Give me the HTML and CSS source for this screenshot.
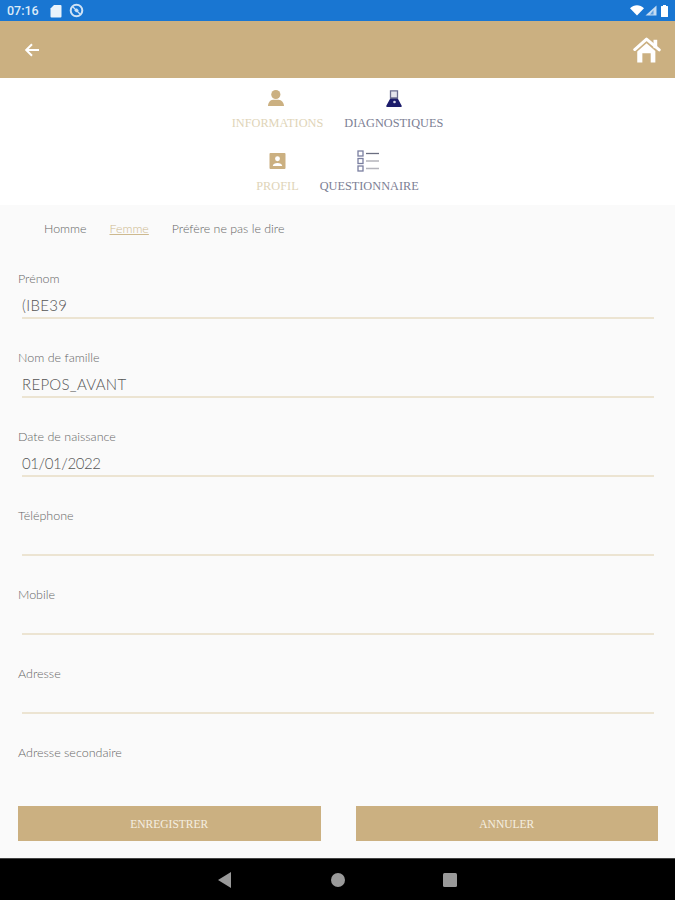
FILE: index.html
```html
<!DOCTYPE html>
<html lang="fr">
<head>
    <meta charset="UTF-8">
    <meta name="viewport" content="width=device-width, initial-scale=1.0">
    <title>Profil</title>
    <link rel="stylesheet" href="styles.css">
</head>
<body>
    <div class="status-bar">
        <div class="status-left">
            <span class="status-time">07:16</span>
            <svg width="12" height="14" viewBox="0 0 12 14"><path d="M4 1h6.500a1 1 0 0 1 1 1v10.500a1 1 0 0 1-1 1h-9a1 1 0 0 1-1-1V4.500z" fill="#eaf3fb"/></svg>
            <svg width="15" height="15" viewBox="0 0 15 15"><circle cx="7.500" cy="7.500" r="5.800" fill="none" stroke="#cfe2f5" stroke-width="2"/><path d="M3.500 3.500l8 8" stroke="#cfe2f5" stroke-width="1.300"/><path d="M5.200 7.200l2.600-2 2 2.400-2.600 2z" fill="#cfe2f5"/></svg>
        </div>
        <div class="status-right">
            <svg width="14" height="11" viewBox="0 0 14 11"><path d="M0 3.200C4-.8 10-.8 14 3.200L7 10.500z" fill="#fff"/></svg>
            <svg width="12" height="11" viewBox="0 0 12 11"><path d="M11.500.5v10H.5z" fill="#c4dcf3"/><path d="M8.500 5v4.500H5z" fill="#5c9ee0"/></svg>
            <svg class="battery" width="7" height="12" viewBox="0 0 7 12"><path d="M2 0h3v1h1.500a.5.500 0 0 1 .5.500V11.500a.5.500 0 0 1-.5.500H.5a.5.500 0 0 1-.5-.5V1.500A.5.500 0 0 1 .5 1H2z" fill="#fff"/></svg>
        </div>
    </div>

    <header class="app-bar">
        <svg width="18" height="18" viewBox="0 0 18 18"><path d="M16 9H3.500M9 3.200L3.200 9 9 14.800" fill="none" stroke="#fff" stroke-width="2"/></svg>
        <svg width="28" height="26" viewBox="0 0 30 28"><path d="M22 3h4v9h-4z" fill="#fff"/><path d="M1.800 13.500L14.500 2.300l13.700 11.500" fill="none" stroke="#fff" stroke-width="3.200" stroke-linecap="round" stroke-linejoin="round"/><path d="M4.500 15.500l10-8.800 9.500 8.300v12.500h-5V17.500h-9v10h-5.500z" fill="#fff"/></svg>
    </header>

    <nav class="tabs">
        <div class="tab-row">
            <a class="tab tab-on">
                <span class="tab-icon">
                    <svg width="18" height="18" viewBox="0 0 18 18"><circle cx="7.800" cy="5.500" r="4.600" fill="#cbb081"/><path d="M0 17c0-3 2-6.300 5-6.300h5.600c3 0 5.400 3.300 5.400 6.300z" fill="#cbb081"/></svg>
                </span>
                <span>INFORMATIONS</span>
            </a>
            <a class="tab">
                <span class="tab-icon">
                    <svg width="16" height="17" viewBox="0 0 16 17"><path d="M4.500 8L.3 15.800a.8.800 0 0 0 .7 1.200h14a.8.800 0 0 0 .7-1.200L11.500 8z" fill="#1c1c6b"/><path d="M4.500 .8h7V8h-7z" fill="#e4e4ec" stroke="#6b6d90" stroke-width="1.300"/><circle cx="8.500" cy="12" r="1.300" fill="#d8d8e8"/></svg>
                </span>
                <span>DIAGNOSTIQUES</span>
            </a>
        </div>
        <div class="tab-row tab-row-low">
            <a class="tab tab-on">
                <span class="tab-icon">
                    <svg width="17" height="16" viewBox="0 0 18 17"><path fill-rule="evenodd" d="M1.500 0h15a1 1 0 0 1 1 1v15a1 1 0 0 1-1 1h-15a1 1 0 0 1-1-1V1a1 1 0 0 1 1-1zM9 3.500a2.600 2.600 0 1 0 0 5.200 2.600 2.600 0 0 0 0-5.200zM4 13.800h10c0-2-2.500-3.200-5-3.200s-5 1.200-5 3.200z" fill="#cbb081"/></svg>
                </span>
                <span>PROFIL</span>
            </a>
            <a class="tab">
                <span class="tab-icon">
                    <svg width="24" height="22" viewBox="0 0 24 22"><g fill="none" stroke="#7a7fa0" stroke-width="1.300"><rect x="1" y="1" width="5" height="5"/><rect x="1" y="8.500" width="5" height="5"/><rect x="1" y="16" width="5" height="5"/></g><path d="M9 3.500h13" stroke="#6a6e80" stroke-width="1.300"/><path d="M9 11h13M9 18.500h13" stroke="#b4b4bb" stroke-width="1.300"/></svg>
                </span>
                <span>QUESTIONNAIRE</span>
            </a>
        </div>
    </nav>

    <main class="form">
        <div class="gender-row">
            <span>Homme</span>
            <span class="gender-on">Femme</span>
            <span>Préfère ne pas le dire</span>
        </div>

        <div class="field">
            <label>Prénom</label>
            <div class="field-value">(IBE39</div>
        </div>
        <div class="field">
            <label>Nom de famille</label>
            <div class="field-value">REPOS_AVANT</div>
        </div>
        <div class="field">
            <label>Date de naissance</label>
            <div class="field-value field-date">01/01/2022</div>
        </div>
        <div class="field">
            <label>Téléphone</label>
            <div class="field-value"></div>
        </div>
        <div class="field">
            <label>Mobile</label>
            <div class="field-value"></div>
        </div>
        <div class="field">
            <label>Adresse</label>
            <div class="field-value"></div>
        </div>
        <div class="field field-last">
            <label>Adresse secondaire</label>
        </div>

        <div class="actions">
            <button class="action">ENREGISTRER</button>
            <button class="action">ANNULER</button>
        </div>
    </main>

    <footer class="nav-bar">
        <svg width="15" height="16" viewBox="0 0 15 16"><path d="M13 0v16L0 8z" fill="#9a9a9a"/></svg>
        <svg width="14" height="14" viewBox="0 0 14 14"><circle cx="7" cy="7" r="7" fill="#9a9a9a"/></svg>
        <svg width="14" height="14" viewBox="0 0 14 14"><rect width="14" height="14" rx="1.500" fill="#9a9a9a"/></svg>
    </footer>
</body>
</html>
```

FILE: styles.css
```css
body, html {
    margin: 0;
    height: 100%;
    overflow: hidden;
}

body {
    display: flex;
    flex-direction: column;
    width: 675px;
    height: 900px;
    background: #fafafa;
    font-family: "Lato", "Liberation Sans", sans-serif;
    font-weight: 300;
}

.status-bar {
    height: 21px;
    background: #1976d2;
    display: flex;
    justify-content: space-between;
    align-items: center;
    padding: 0 7px;
}

.status-left, .status-right {
    display: flex;
    align-items: center;
}

.status-left { gap: 7px; }
.status-right { gap: 1px; }

.status-time {
    font-family: "Roboto", sans-serif;
    font-weight: 500;
    font-size: 12.500px;
    color: #dcebf8;
    width: 32px;
    margin-right: 4px;
}

.battery { margin-left: 3px; }

.app-bar {
    height: 57px;
    background: #cbb081;
    display: flex;
    justify-content: space-between;
    align-items: center;
    padding: 0 14px 0 23px;
}

.tabs {
    height: 127px;
    background: #fff;
    display: flex;
    flex-direction: column;
    padding-top: 9px;
    box-sizing: border-box;
}

.tab-row {
    display: flex;
    justify-content: center;
    gap: 21px;
}

.tab-row-low { margin-top: 20px; }

.tab {
    display: flex;
    flex-direction: column;
    align-items: center;
    gap: 7px;
    font-family: "Liberation Serif", serif;
    font-weight: 400;
    font-size: 12.300px;
    line-height: 14px;
    color: #7c8094;
    white-space: nowrap;
}

.tab-on { color: #e0d4b8; }

.tab-icon {
    height: 22px;
    display: flex;
    align-items: center;
}

.form {
    flex: 1;
    display: flex;
    flex-direction: column;
    padding: 0 17px 0 18px;
    min-height: 0;
}

.gender-row {
    display: flex;
    gap: 23px;
    padding: 16px 0 0 26px;
    height: 49px;
    box-sizing: border-box;
    font-size: 12.400px;
    color: #666;
}

.gender-on {
    color: #cdb98f;
    text-decoration: underline;
}

.field {
    height: 79px;
    flex: none;
    padding-top: 18px;
    box-sizing: border-box;
}

.field-last { height: 78px; }

.field label {
    display: block;
    font-size: 12.500px;
    line-height: 14px;
    color: #666;
}

.field-value {
    height: 22px;
    margin: 9px 4px 0;
    border-bottom: 2px solid #ece4d2;
    font-size: 15px;
    line-height: 20px;
    color: #555;
    letter-spacing: 0.3px;
}

.field-date { letter-spacing: -0.4px; }

.actions {
    display: flex;
    justify-content: space-between;
}

.action {
    width: 302.500px;
    height: 35px;
    padding: 0;
    border: 0;
    background: #cbb081;
    color: #f5efe2;
    font-family: "Liberation Serif", serif;
    font-size: 11.500px;
}

.nav-bar {
    height: 42px;
    box-sizing: border-box;
    background: #000;
    border-top: 1px solid #444;
    display: flex;
    justify-content: center;
    align-items: center;
    gap: 98px;
    flex: none;
}
```
